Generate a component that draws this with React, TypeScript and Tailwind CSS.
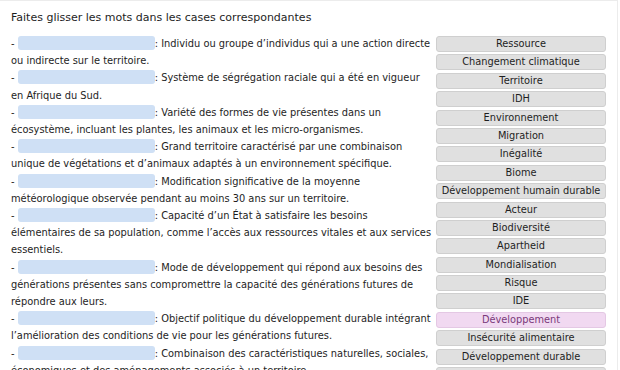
import React from "react";

const items = [
  "Individu ou groupe d’individus qui a une action directe ou indirecte sur le territoire.",
  "Système de ségrégation raciale qui a été en vigueur en Afrique du Sud.",
  "Variété des formes de vie présentes dans un écosystème, incluant les plantes, les animaux et les micro-organismes.",
  "Grand territoire caractérisé par une combinaison unique de végétations et d’animaux adaptés à un environnement spécifique.",
  "Modification significative de la moyenne météorologique observée pendant au moins 30 ans sur un territoire.",
  "Capacité d’un État à satisfaire les besoins élémentaires de sa population, comme l’accès aux ressources vitales et aux services essentiels.",
  "Mode de développement qui répond aux besoins des générations présentes sans compromettre la capacité des générations futures de répondre aux leurs.",
  "Objectif politique du développement durable intégrant l’amélioration des conditions de vie pour les générations futures.",
  "Combinaison des caractéristiques naturelles, sociales, économiques et des aménagements associés à un territoire.",
];

const words = [
  "Ressource",
  "Changement climatique",
  "Territoire",
  "IDH",
  "Environnement",
  "Migration",
  "Inégalité",
  "Biome",
  "Développement humain durable",
  "Acteur",
  "Biodiversité",
  "Apartheid",
  "Mondialisation",
  "Risque",
  "IDE",
  "Développement",
  "Insécurité alimentaire",
  "Développement durable",
  "Pays",
];

export default function App() {
  return (
    <div className="w-[620px] h-[370px] overflow-hidden bg-white font-['DejaVu_Sans',sans-serif] text-[#1e1e1e]">
      <div className="w-[618px] h-[380px] border-t border-r border-[#ececec] pl-[11px] pt-[9px]">
        <h1 className="text-[11px] leading-[16px]">Faites glisser les mots dans les cases correspondantes</h1>

        <div className="flex mt-[9px]">
          {/* sentences with drop zones */}
          <div className="w-[424px] text-[9.85px] leading-[17.2px]">
            {items.map((t, i) => (
              <div key={i}>
                -{" "}
                <span className="inline-block align-middle w-[137px] h-[14px] rounded-[3px] bg-[#cfe0f5] -mt-[2px]" />
                : {t}
              </div>
            ))}
          </div>

          {/* word bank */}
          <div className="ml-[1px] w-[170px] flex flex-col gap-[2.4px] mt-[1px]">
            {words.map((w) => (
              <div
                key={w}
                className={
                  w === "Développement"
                    ? "h-[16px] shrink-0 rounded-[3px] border border-[#e4c8e4] bg-[#f1d9f1] text-[#7a3a7a] text-[9.8px] leading-[14px] text-center"
                    : "h-[16px] shrink-0 rounded-[3px] border border-[#cfcfcf] bg-[#e0e0e0] text-[#1e1e1e] text-[9.8px] leading-[14px] text-center"
                }
              >
                {w}
              </div>
            ))}
          </div>
        </div>
      </div>
    </div>
  );
}
